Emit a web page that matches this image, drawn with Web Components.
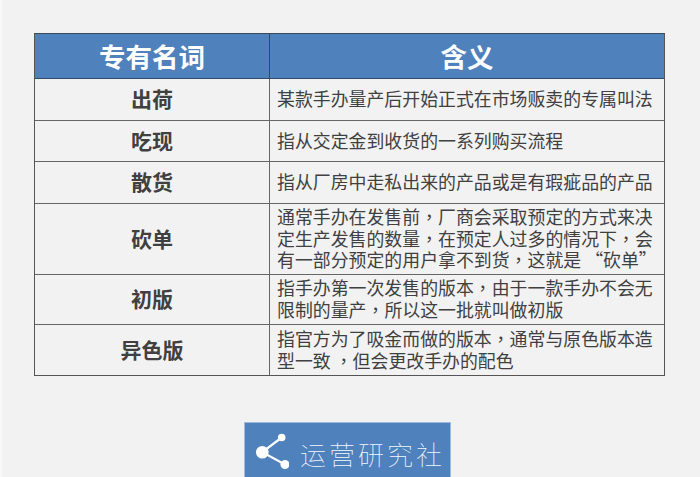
<!DOCTYPE html>
<html lang="zh">
<head>
<meta charset="utf-8">
<style>
    html, body { margin: 0; background: #f2f2f2; }
    body {
        width: 700px;
        height: 477px;
        overflow: hidden;
        font-family: "Liberation Sans", "Noto Sans CJK SC", sans-serif;
    }
    /* commas sit in the middle of the cell in the reference, TC forms do that */
    i { font-style: normal; font-family: "Noto Sans CJK TC", sans-serif; }
</style>
</head>
<body>
<term-page>
    <term-table>
        <term-head name="专有名词" meaning="含义"></term-head>
        <term-row name="出荷" height="42">某款手办量产后开始正式在市场贩卖的专属叫法</term-row>
        <term-row name="吃现" height="41">指从交定金到收货的一系列购买流程</term-row>
        <term-row name="散货" height="42">指从厂房中走私出来的产品或是有瑕疵品的产品</term-row>
        <term-row name="砍单" height="71">通常手办在发售前<i lang="zh-TW">，</i>厂商会采取预定的方式来决<br>定生产发售的数量<i lang="zh-TW">，</i>在预定人过多的情况下<i lang="zh-TW">，</i>会<br>有一部分预定的用户拿不到货<i lang="zh-TW">，</i>这就是 “砍单”</term-row>
        <term-row name="初版" height="50">指手办第一次发售的版本<i lang="zh-TW">，</i>由于一款手办不会无<br>限制的量产<i lang="zh-TW">，</i>所以这一批就叫做初版</term-row>
        <term-row name="异色版" height="50">指官方为了吸金而做的版本<i lang="zh-TW">，</i>通常与原色版本造<br>型一致 <i lang="zh-TW">，</i>但会更改手办的配色</term-row>
    </term-table>
    <brand-badge>运营研究社</brand-badge>
</term-page>

<script>
const CJK = '"Noto Sans CJK SC", "Liberation Sans", sans-serif';

class TermPage extends HTMLElement {
    constructor() {
        super();
        this.attachShadow({ mode: 'open' });
        this.shadowRoot.innerHTML = `
            <style>
                :host {
                    display: flex;
                    flex-direction: column;
                    align-items: flex-start;
                    box-sizing: border-box;
                    width: 700px;
                    height: 477px;
                    padding: 33px 0 0 32px;
                    border-left: 2px solid #f8f8f8;
                }
                ::slotted(brand-badge) {
                    margin: 46px 0 0 210px;
                }
            </style>
            <slot></slot>
        `;
    }
}

class TermTable extends HTMLElement {
    constructor() {
        super();
        this.attachShadow({ mode: 'open' });
        this.shadowRoot.innerHTML = `
            <style>
                :host {
                    display: block;
                    box-sizing: border-box;
                    width: 631px;
                    border-top: 1px solid #3a4a5e;
                    border-left: 1px solid #555;
                    border-right: 1px solid #555;
                    border-bottom: 1px solid #555;
                }
            </style>
            <slot></slot>
        `;
    }
}

class TermHead extends HTMLElement {
    constructor() {
        super();
        this.attachShadow({ mode: 'open' });
        this.shadowRoot.innerHTML = `
            <style>
                :host {
                    display: grid;
                    grid-template-columns: 234px 1fr;
                    height: 45px;
                    box-sizing: border-box;
                    background: #4f81bd;
                    border-bottom: 1px solid #2f4a6b;
                    color: #fff;
                    font: bold 26.5px ${CJK};
                }
                div {
                    display: flex;
                    align-items: center;
                    justify-content: center;
                    padding-bottom: 1px;
                }
                div:first-child { padding-right: 2px; }
                div + div { border-left: 1px solid #2f4a6b; }
            </style>
            <div>${this.getAttribute('name')}</div>
            <div>${this.getAttribute('meaning')}</div>
        `;
    }
}

class TermRow extends HTMLElement {
    constructor() {
        super();
        this.attachShadow({ mode: 'open' });
        this.shadowRoot.innerHTML = `
            <style>
                :host {
                    display: grid;
                    grid-template-columns: 234px 1fr;
                    box-sizing: border-box;
                    height: ${this.getAttribute('height')}px;
                    border-bottom: 1px solid #666;
                    font-family: ${CJK};
                    color: #404040;
                }
                :host(:last-child) { border-bottom: 0; }
                .name {
                    display: flex;
                    align-items: center;
                    justify-content: center;
                    font-size: 21px;
                    font-weight: bold;
                    padding: 0 0 3px 0;
                }
                .text {
                    display: flex;
                    align-items: center;
                    border-left: 1px solid #666;
                    padding: 0 0 1px 7px;
                    font-size: 17.9px;
                    line-height: 21.6px;
                    white-space: nowrap;
                }
            </style>
            <div class="name">${this.getAttribute('name')}</div>
            <div class="text"><span><slot></slot></span></div>
        `;
    }
}

class BrandBadge extends HTMLElement {
    constructor() {
        super();
        this.attachShadow({ mode: 'open' });
        this.shadowRoot.innerHTML = `
            <style>
                :host {
                    display: flex;
                    align-items: center;
                    box-sizing: border-box;
                    width: 207px;
                    height: 55px;
                    padding: 0 0 0 11px;
                    gap: 11px;
                    background: #4f81bd;
                    border: 1px solid #9fbbdb;
                    border-bottom: 0;
                    color: #f4f8fc;
                    font: 100 26px ${CJK};
                    letter-spacing: 3px;
                    white-space: nowrap;
                }
                svg { flex: none; }
                span { padding-top: 6px; }
            </style>
            <svg width="33" height="40" viewBox="0 0 33 40">
                <path d="M25.7 7.5 L6.3 22.2 L29 34.5" stroke="#fff" stroke-width="2.2" fill="none"/>
                <circle cx="25.7" cy="7.5" r="3.8" fill="#fff"/>
                <circle cx="6.3" cy="22.2" r="6.3" fill="#fff"/>
                <circle cx="29" cy="34.5" r="4.5" fill="#fff"/>
            </svg>
            <span><slot></slot></span>
        `;
    }
}

customElements.define('term-page', TermPage);
customElements.define('term-table', TermTable);
customElements.define('term-head', TermHead);
customElements.define('term-row', TermRow);
customElements.define('brand-badge', BrandBadge);
</script>
</body>
</html>
